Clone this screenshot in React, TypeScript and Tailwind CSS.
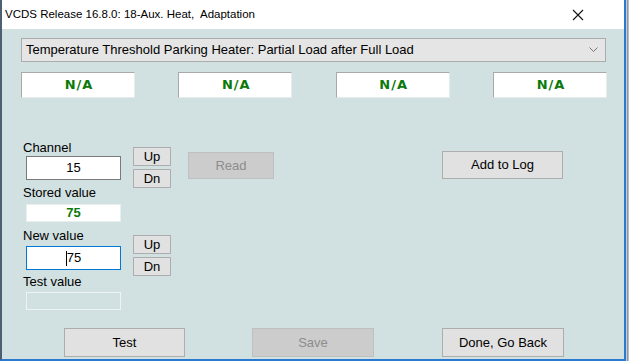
import React from 'react';

const FONT = { fontFamily: '"Liberation Sans", Arial, sans-serif' };
const WIDE = { fontFamily: '"DejaVu Sans", Verdana, sans-serif' };

const NaBox: React.FC = () => (
  <div
    className="w-[114px] h-[26px] bg-white border-t border-l border-[#a9a9a9] border-r border-b border-r-[#e6ecec] border-b-[#e6ecec] flex items-center justify-center pl-[2px] text-[13px] font-bold text-[#0b7a0b] tracking-[1px]"
    style={WIDE}
  >
    N/A
  </div>
);

const SmallButton: React.FC<{ label: string }> = ({ label }) => (
  <div className="w-[38px] h-[19px] bg-[#e1e1e1] border border-[#adadad] flex items-center justify-center text-[13px] text-black leading-none">
    {label}
  </div>
);

const Button: React.FC<{ label: string; disabled?: boolean; className?: string }> = ({ label, disabled, className }) => (
  <div
    className={
      'flex items-center justify-center text-[13px] border ' +
      (disabled ? 'bg-[#cccccc] border-[#bfbfbf] text-[#8d8d8d] ' : 'bg-[#e1e1e1] border-[#adadad] text-black ') +
      (className ?? '')
    }
  >
    {label}
  </div>
);

export default function App() {
  return (
    <div className="w-[629px] h-[361px] flex bg-[#a7b0ba] overflow-hidden" style={FONT}>
      <div className="w-[626px] h-full flex flex-col border-l-2 border-l-[#4d5f73] border-r-2 border-r-[#2a7bd0] border-b-2 border-b-[#2a7bd0]">
        {/* title bar */}
        <div className="h-[29px] bg-white flex items-center justify-between pl-[3px] pr-[40px] pt-[1px]">
          <span className="text-[11.5px] text-black">VCDS Release 16.8.0: 18-Aux. Heat,&nbsp; Adaptation</span>
          <svg width="12" height="12" viewBox="0 0 12 12">
            <path d="M1 1 L11 11 M11 1 L1 11" stroke="#111" strokeWidth="1.1" />
          </svg>
        </div>

        {/* body */}
        <div className="flex-1 bg-[#d1e0e0] flex flex-col pt-[9px]">
          {/* dropdown */}
          <div className="ml-[19px] w-[585px] h-[24px] bg-[#e5e5e5] border border-[#acacac] flex items-center justify-between pl-[4px] pr-[7px]">
            <span className="text-[13px] text-black">Temperature Threshold Parking Heater: Partial Load after Full Load</span>
            <svg width="9" height="6" viewBox="0 0 9 6">
              <path d="M0.5 0.5 L4.5 4.5 L8.5 0.5" stroke="#777" strokeWidth="1" fill="none" />
            </svg>
          </div>

          {/* N/A row */}
          <div className="ml-[19px] w-[586px] mt-[10px] flex justify-between">
            <NaBox />
            <NaBox />
            <NaBox />
            <NaBox />
          </div>

          {/* middle */}
          <div className="flex mt-[42px]">
            <div className="ml-[21px] w-[98px] flex flex-col text-[13px] text-black">
              <div className="h-[16px] leading-[16px]">Channel</div>
              <div className="ml-[3px] w-[95px] h-[24px] bg-white border border-[#7a7a7a] flex items-center justify-center">15</div>
              <div className="mt-[5px] h-[16px] leading-[16px]">Stored value</div>
              <div className="ml-[3px] mt-[3px] w-[95px] h-[18px] bg-white border border-[#e9eeee] flex items-center justify-center font-bold text-[#0b7a0b]">75</div>
              <div className="mt-[6px] h-[16px] leading-[16px]">New value</div>
              <div className="ml-[3px] mt-[2px] w-[95px] h-[24px] bg-white border border-[#0078d7] flex items-center justify-center">
                <span className="w-px h-[15px] bg-black" />
                <span>75</span>
              </div>
              <div className="mt-[4px] h-[16px] leading-[16px]">Test value</div>
              <div className="ml-[3px] mt-[2px] w-[95px] h-[18px] border border-[#eef3f3]" />
            </div>

            <div className="ml-[12px] flex flex-col">
              <div className="mt-[7px]">
                <SmallButton label="Up" />
              </div>
              <div className="mt-[3px]">
                <SmallButton label="Dn" />
              </div>
              <div className="mt-[47px]">
                <SmallButton label="Up" />
              </div>
              <div className="mt-[3px]">
                <SmallButton label="Dn" />
              </div>
            </div>

            <Button label="Read" disabled className="ml-[17px] mt-[12px] w-[86px] h-[27px]" />
            <Button label="Add to Log" className="ml-[168px] mt-[11px] w-[121px] h-[28px]" />
          </div>

          {/* bottom buttons */}
          <div className="flex mt-[18px]">
            <Button label="Test" className="ml-[62px] w-[121px] h-[29px]" />
            <Button label="Save" disabled className="ml-[67px] w-[122px] h-[29px]" />
            <Button label="Done, Go Back" className="ml-[68px] w-[122px] h-[29px]" />
          </div>
        </div>
      </div>
      <div className="flex-1 flex">
        <div className="w-px bg-[#c5ccd2]" />
        <div className="w-px bg-[#8f99a3]" />
        <div className="flex-1 bg-[#b4bcc4]" />
      </div>
    </div>
  );
}
